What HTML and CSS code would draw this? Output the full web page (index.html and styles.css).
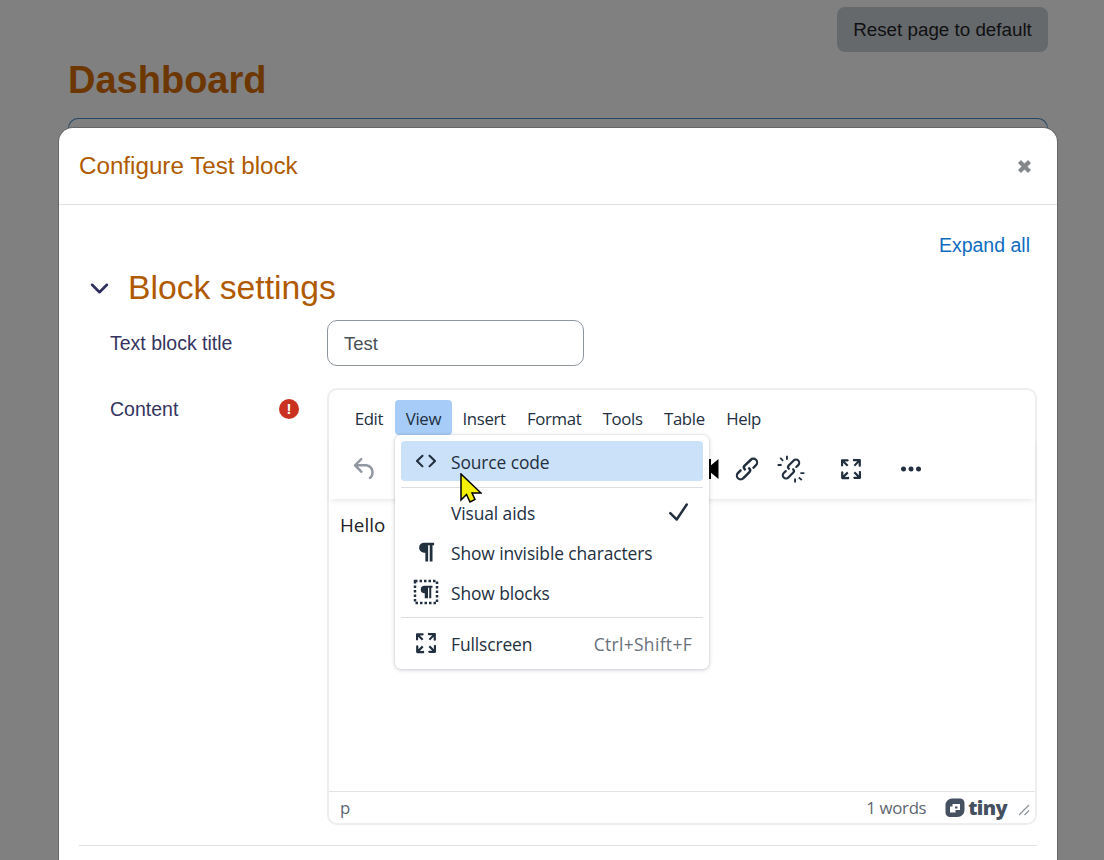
FILE: index.html
```html
<!DOCTYPE html>
<html lang="en">
<head>
<meta charset="utf-8">
<title>Dashboard</title>
<link rel="stylesheet" href="styles.css">
</head>
<body>
<div class="page">
  <div class="page-actions"><button class="reset-btn">Reset page to default</button></div>
  <h1 class="page-title">Dashboard</h1>
  <div class="page-box"></div>
</div>

<div class="modal">
  <header class="modal-header">
    <h5 class="modal-title">Configure Test block</h5>
    <svg class="close-icon" viewBox="0 0 12 12"><path d="M2 2l8 8M10 2l-8 8"/></svg>
  </header>
  <div class="modal-body">
    <div class="expand-row"><a class="expand-link">Expand all</a></div>
    <div class="section-head">
      <svg class="chevron" viewBox="0 0 18 12"><path d="M2 2.5l7 7 7-7"/></svg>
      <h3 class="section-title">Block settings</h3>
    </div>
    <div class="form-row title-row">
      <label class="form-label">Text block title</label>
      <div class="text-input">Test</div>
    </div>
    <div class="form-row content-row">
      <div class="form-label content-label">
        <span>Content</span>
        <span class="required">!</span>
      </div>
      <div class="editor">
        <div class="menubar">
          <span class="menu-item">Edit</span>
          <span class="menu-item active">View</span>
          <span class="menu-item">Insert</span>
          <span class="menu-item">Format</span>
          <span class="menu-item">Tools</span>
          <span class="menu-item">Table</span>
          <span class="menu-item">Help</span>
        </div>
        <div class="toolbar">
          <svg class="tool undo" viewBox="0 0 24 24"><path d="M6.4 8H12c3.7 0 6.2 2 6.8 5.1.6 2.7-.4 5.6-2.3 6.8a1 1 0 0 1-1-1.8c1.1-.6 1.8-2.7 1.4-4.6-.5-2.1-2.1-3.5-4.9-3.5H6.4l3.3 3.3a1 1 0 1 1-1.4 1.4l-5-5a1 1 0 0 1 0-1.4l5-5a1 1 0 0 1 1.4 1.4L6.4 8Z"/></svg>
          <span class="tool-spacer"></span>
          <svg class="tool media" viewBox="0 0 24 24"><path d="M0 4h12v5l6-5v16l-6-5v5H0Z"/></svg>
          <svg class="tool link" viewBox="0 0 24 24"><path d="M6.2 12.3a1 1 0 0 1 1.4 1.4l-2 2a2 2 0 1 0 2.8 2.8l4.8-4.8a1 1 0 0 0 0-1.4 1 1 0 1 1 1.4-1.3 2.9 2.9 0 0 1 0 4.1L9.8 20a3.9 3.9 0 0 1-5.6-5.6l2-2Zm11.6-.6a1 1 0 0 1-1.4-1.4l2-2a2 2 0 1 0-2.8-2.8L10.8 10a1 1 0 0 0 0 1.4 1 1 0 1 1-1.4 1.3 2.9 2.9 0 0 1 0-4.1L14.2 4a3.9 3.9 0 0 1 5.6 5.6l-2 2Z"/></svg>
          <svg class="tool unlink" viewBox="0 0 24 24"><path d="M7.400 12.800a1 1 0 0 1 1.200 1.300l-1.800 1.700a1.700 1.700 0 1 0 2.400 2.400l4-4a.9.9 0 0 0 0-1.200 .9.9 0 1 1 1.300-1.200 2.600 2.600 0 0 1 0 3.600L10.500 19.400a3.400 3.400 0 0 1-4.900-4.900l1.800-1.700Zm9.200-1.600a1 1 0 0 1-1.200-1.300l1.800-1.700a1.700 1.700 0 1 0-2.400-2.400l-4 4a.9.9 0 0 0 0 1.200 .9.9 0 1 1-1.300 1.200 2.600 2.600 0 0 1 0-3.600L13.500 4.600a3.400 3.400 0 0 1 4.900 4.900l-1.800 1.700Z"/><path d="M3.900 2.600l2.300 2.300-1 1-2.300-2.300ZM8 1.300h1.500v3.200H8ZM1.300 8h3.200v1.500H1.300ZM20.100 21.400l-2.300-2.300 1-1 2.300 2.300ZM14.500 19.500H16v3.200h-1.500ZM19.500 14.500h3.200V16h-3.200Z"/></svg>
          <svg class="tool fullscreen" viewBox="0 0 24 24"><path d="m15.3 10-1.2-1.3 2.9-3h-2.300a.9.9 0 1 1 0-1.700H19c.5 0 .9.4.9.9v4.400a.9.9 0 1 1-1.800 0V7l-2.900 3Zm0 4 3 3v-2.300a.9.9 0 1 1 1.700 0V19c0 .5-.4.9-.9.9h-4.400a.9.9 0 1 1 0-1.800H17l-3-2.900 1.300-1.200ZM10 15.400l-2.900 3h2.300a.9.9 0 1 1 0 1.700H5a.9.9 0 0 1-.9-.9v-4.400a.9.9 0 1 1 1.800 0V17l2.900-3 1.200 1.300ZM8.700 10 5.700 7v2.300a.9.9 0 0 1-1.700 0V5c0-.5.4-.9.9-.9h4.400a.9.9 0 0 1 0 1.800H7l3 2.900-1.300 1.200Z"/></svg>
          <svg class="tool more" viewBox="0 0 24 24"><path d="M6 10a2 2 0 0 0-2 2c0 1.100.9 2 2 2a2 2 0 0 0 2-2 2 2 0 0 0-2-2Zm12 0a2 2 0 0 0-2 2c0 1.100.9 2 2 2a2 2 0 0 0 2-2 2 2 0 0 0-2-2Zm-6 0a2 2 0 0 0-2 2c0 1.100.9 2 2 2a2 2 0 0 0 2-2 2 2 0 0 0-2-2Z"/></svg>
        </div>
        <div class="editor-content">Hello</div>
        <div class="statusbar">
          <span class="path">p</span>
          <span class="status-right">
            <span class="word-count">1 words</span>
            <span class="tiny-logo">
              <svg class="tiny-mark" viewBox="0 0 20 20"><path fill-rule="evenodd" d="M7 .5h8a4.500 4.500 0 0 1 4.500 4.500v7a7 7 0 0 1-7 7H5A4.500 4.500 0 0 1 .5 14.500V7A6.500 6.500 0 0 1 7 .5Zm.5 5.500v2.500H5v6h5.500v-2.500H15V6Zm2.500 2.500h2.500v2H10Z"/></svg>
              <span class="tiny-word">tiny</span>
            </span>
            <svg class="resize-handle" viewBox="0 0 12 12"><path d="M1 11L11 1M6.500 11L11 6.500"/></svg>
          </span>
        </div>
        <div class="menu">
          <div class="menu-row highlighted">
            <svg class="menu-icon" viewBox="0 0 24 24"><path d="M9.800 15.700c.3.3.3.8 0 1-.3.4-.9.4-1.200 0l-4.400-4.100a.8.8 0 0 1 0-1.200l4.400-4.200c.3-.3.9-.3 1.200 0 .3.3.3.8 0 1.100L6 12l3.800 3.700ZM14.200 15.700c-.3.3-.3.8 0 1 .4.400.9.400 1.200 0l4.400-4.100c.3-.3.3-.9 0-1.200l-4.400-4.200a.8.8 0 0 0-1.200 0c-.3.3-.3.8 0 1.100L18 12l-3.800 3.700Z"/></svg>
            <span class="menu-text">Source code</span>
          </div>
          <div class="menu-sep sep-first"></div>
          <div class="menu-row">
            <span class="menu-icon"></span>
            <span class="menu-text">Visual aids</span>
            <svg class="menu-check" viewBox="0 0 24 24"><path d="M18.200 5.400a1 1 0 0 1 1.600 1.200l-8 12a1 1 0 0 1-1.500.100l-5-5a1 1 0 1 1 1.400-1.400l4.100 4.100 7.400-11Z"/></svg>
          </div>
          <div class="menu-row">
            <svg class="menu-icon" viewBox="0 0 24 24"><path d="M10.500 4.500H18.500v2h-1.300v13h-2.200v-13h-1.300v13h-2.200v-7h-1a4 4 0 0 1 0-8Z"/></svg>
            <span class="menu-text">Show invisible characters</span>
          </div>
          <div class="menu-row">
            <svg class="menu-icon" viewBox="0 0 24 24"><path d="M10.800 7h6.400v1.500h-1V17h-1.600V8.500h-1V17H11v-4h-.2a3 3 0 0 1 0-6Z"/><path class="dots" d="M3.200 3.200H20.800V20.800H3.200Z"/></svg>
            <span class="menu-text">Show blocks</span>
          </div>
          <div class="menu-sep sep-last"></div>
          <div class="menu-row">
            <svg class="menu-icon" viewBox="0 0 24 24"><path d="m15.300 10-1.200-1.300 2.900-3h-2.300a.9.9 0 1 1 0-1.700H19c.5 0 .9.4.9.9v4.400a.9.9 0 1 1-1.800 0V7l-2.900 3Zm0 4 3 3v-2.300a.9.9 0 1 1 1.700 0V19c0 .5-.4.9-.9.9h-4.400a.9.9 0 1 1 0-1.800H17l-3-2.900 1.300-1.200ZM10 15.400l-2.900 3h2.300a.9.9 0 1 1 0 1.700H5a.9.9 0 0 1-.9-.9v-4.400a.9.9 0 1 1 1.800 0V17l2.900-3 1.200 1.300ZM8.700 10 5.700 7v2.300a.9.9 0 0 1-1.700 0V5c0-.5.4-.9.9-.9h4.400a.9.9 0 0 1 0 1.800H7l3 2.900-1.300 1.200Z"/></svg>
            <span class="menu-text">Fullscreen</span>
            <span class="menu-shortcut">Ctrl+Shift+F</span>
          </div>
        </div>
      </div>
    </div>
    <div class="modal-rule"></div>
  </div>
</div>

<svg class="cursor" viewBox="0 0 22 30"><path d="M1 1V27L6.500 21.500 10 29 15 26.500 12 20H21Z"/></svg>
</body>
</html>
```
FILE: styles.css
```css
* { box-sizing: border-box; }
html, body { height: 100%; }
body {
  margin: 0;
  height: 860px;
  overflow: hidden;
  position: relative;
  background: #808080;
  font-family: "Liberation Sans", Arial, sans-serif;
  color: #1d2125;
}
.page { padding: 7px 56px 0 68px; }
.page-actions { display: flex; justify-content: flex-end; }
.reset-btn {
  width: 211px;
  height: 45px;
  border: 0;
  border-radius: 8px;
  background: #66696b;
  color: #0f1012;
  font: 18.800px "Liberation Sans", Arial, sans-serif;
}
.page-title {
  margin: 7px 0 0;
  font-size: 38px;
  line-height: 43px;
  font-weight: 700;
  color: #6c3700;
}
.page-box {
  margin-top: 16px;
  height: 40px;
  border: 1px solid #244766;
  border-bottom: 0;
  border-radius: 10px 10px 0 0;
  background: #7f7f7f;
}
.modal {
  position: absolute;
  left: 59px;
  top: 128px;
  width: 998px;
  height: 760px;
  background: #fff;
  border-radius: 14px;
  box-shadow: 0 0 0 1px #666;
}
.modal-header {
  height: 77px;
  padding: 0 25px 0 20px;
  display: flex;
  align-items: center;
  justify-content: space-between;
  border-bottom: 1px solid #dee2e6;
}
.modal-title {
  margin: 0;
  font-size: 24.200px;
  font-weight: 400;
  color: #b05a00;
}
.close-icon { width: 15px; height: 15px; fill: none; stroke: #85888a; stroke-width: 3.400; }
.modal-body { padding: 0 20px; }
.expand-row { display: flex; justify-content: flex-end; padding: 29px 7px 0 0; height: 58px; }
.expand-link { color: #0f6cbf; font-size: 19.500px; line-height: 22px; }
.section-head { display: flex; align-items: center; height: 50px; padding-left: 11px; }
.chevron { width: 19px; height: 13px; fill: none; stroke: #2f2f5e; stroke-width: 2.500; stroke-linecap: round; stroke-linejoin: round; }
.section-title {
  margin: 0 0 2px 19px;
  font-size: 33.700px;
  font-weight: 400;
  color: #b05a00;
}
.form-row { display: flex; padding-left: 31px; }
.form-label { width: 217px; font-size: 19.500px; color: #34345f; }
.title-row { margin-top: 7px; align-items: center; }
.text-input {
  width: 257px;
  height: 46px;
  border: 1px solid #8f959e;
  border-radius: 10px;
  padding: 0 16px;
  font-size: 18.500px;
  line-height: 46px;
  color: #495057;
}
.content-row { margin-top: 22px; align-items: flex-start; }
.content-label {
  display: flex;
  align-items: center;
  justify-content: space-between;
  padding: 11px 28px 0 0;
  line-height: 20px;
}
.required {
  width: 20px;
  height: 20px;
  border-radius: 50%;
  background: #ca3120;
  color: #fff;
  font-size: 15px;
  font-weight: 700;
  line-height: 20px;
  text-align: center;
}
.editor {
  position: relative;
  width: 710px;
  height: 437px;
  border: 2px solid #eeeeee;
  border-radius: 10px;
  display: flex;
  flex-direction: column;
  font-family: "Open Sans", "Noto Sans", sans-serif;
  color: #222f3e;
}
.menubar { display: flex; padding: 10px 0 0 15px; height: 46px; }
.menu-item {
  height: 35px;
  padding: 0 10.700px;
  font-size: 16.800px;
  line-height: 37px;
  border-radius: 4px;
  letter-spacing: -0.350px;
}
.menu-item:first-child { padding-right: 12px; }
.menu-item.active { background: #a6ccf7; }
.toolbar {
  height: 63px;
  display: flex;
  align-items: center;
  padding: 3px 0 0 21px;
  box-shadow: 0 3px 6px -2px rgba(34, 47, 62, .14);
  position: relative;
}
.tool { width: 30px; height: 30px; fill: #222f3e; flex: none; }
.undo { fill: #9097a0; }
.tool-spacer { flex: none; width: 316px; }
.media { margin-right: 6px; fill: #000; }
.unlink { margin-left: 14px; }
.fullscreen { margin-left: 30px; }
.more { margin-left: 30px; }
.editor-content {
  flex: 1;
  padding: 14px 11px;
  font-size: 18.800px;
  line-height: 24px;
  color: #1d2125;
}
.statusbar {
  height: 32px;
  border-top: 1px solid #e3e3e3;
  display: flex;
  align-items: center;
  justify-content: space-between;
  padding: 0 5px 0 11px;
  font-size: 16.800px;
  color: #5d6670;
}
.status-right { display: flex; align-items: center; }
.word-count { letter-spacing: -0.300px; }
.tiny-logo { display: flex; align-items: center; margin-left: 19px; fill: #455060; }
.tiny-mark { width: 20px; height: 20px; }
.tiny-word {
  margin-left: 3px;
  font-size: 20px;
  line-height: 22px;
  font-weight: 800;
  color: #455060;
  letter-spacing: -0.650px;
}
.resize-handle { width: 12px; height: 12px; margin: 5px 0 0 11px; fill: none; stroke: #8c929a; stroke-width: 1.200; }
.menu {
  position: absolute;
  left: 66px;
  top: 45px;
  width: 314px;
  height: 234px;
  padding: 6px;
  background: #fff;
  border-radius: 6px;
  box-shadow: 0 1px 4px rgba(34, 47, 62, .22), 0 0 0 1px rgba(34, 47, 62, .05);
  z-index: 2;
}
.menu-row {
  height: 40px;
  display: flex;
  align-items: center;
  padding: 0 10px 0 10px;
  border-radius: 4px;
  font-size: 17.400px;
  letter-spacing: -0.100px;
}
.menu-icon { width: 30px; height: 30px; flex: none; fill: #222f3e; margin-right: 10px; }
.menu-row.highlighted { background: #cbe0f9; }
.menu-text { flex: 1; padding-top: 2px; }
.dots { fill: none; stroke: #222f3e; stroke-width: 2; stroke-dasharray: 2 1.600; }
.menu-check { width: 30px; height: 30px; fill: #222f3e; }
.menu-shortcut { color: #666f7a; margin-right: 1px; padding-top: 2px; letter-spacing: 0.350px; }
.menu-sep { height: 1px; background: #dde0e3; }
.sep-first { margin: 6px 0 4px; }
.sep-last { margin: 5px 0; }
.modal-rule { margin-top: 20px; height: 1px; background: #dee2e6; }
.cursor {
  position: absolute;
  left: 460px;
  top: 473px;
  width: 22px;
  height: 30px;
  z-index: 3;
  fill: #f5f000;
  stroke: #000;
  stroke-width: 1.500;
}
```
